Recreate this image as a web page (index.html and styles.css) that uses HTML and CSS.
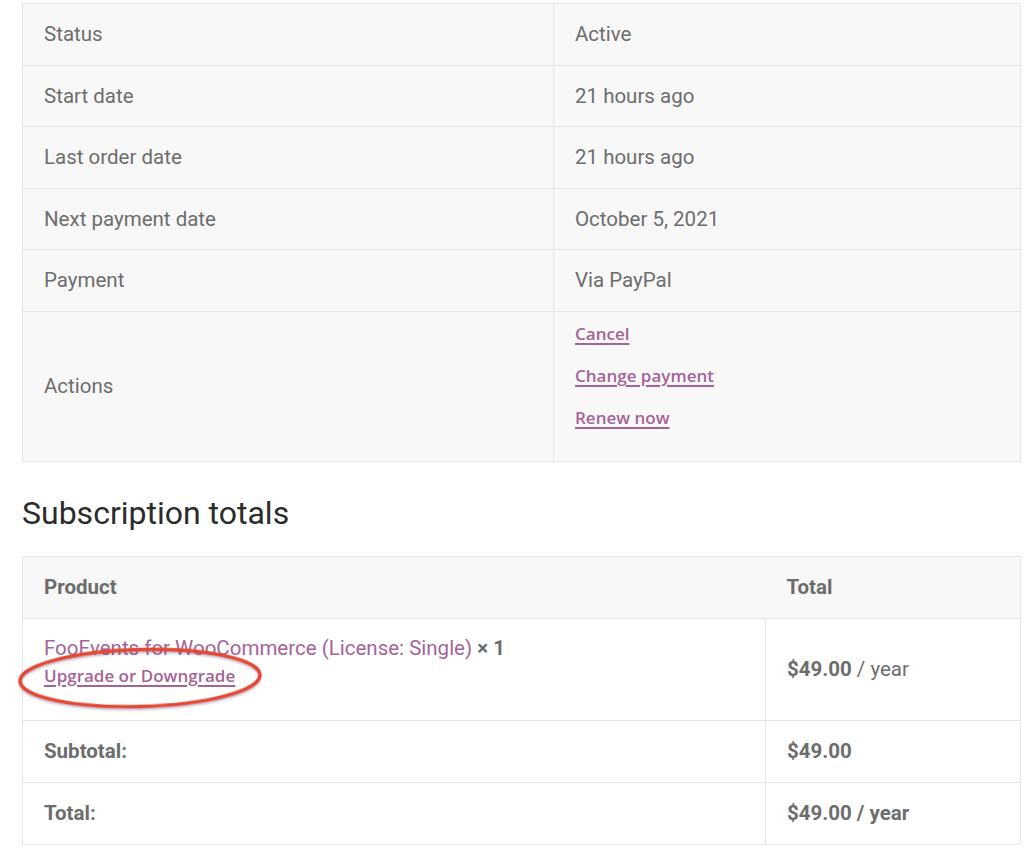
FILE: index.html
```html
<!DOCTYPE html>
<html lang="en">

<head>
  <meta charset="UTF-8">
  <meta name="viewport" content="width=device-width, initial-scale=1.0">
  <title>My Subscription</title>
  <link rel="stylesheet" href="styles.css">
</head>

<body>

  <div class="subscription">
    <table class="details">
      <tbody>
        <tr>
          <td>Status</td>
          <td>Active</td>
        </tr>
        <tr>
          <td>Start date</td>
          <td>21 hours ago</td>
        </tr>
        <tr>
          <td>Last order date</td>
          <td>21 hours ago</td>
        </tr>
        <tr>
          <td>Next payment date</td>
          <td>October 5, 2021</td>
        </tr>
        <tr>
          <td>Payment</td>
          <td>Via PayPal</td>
        </tr>
        <tr class="details__actions">
          <td>Actions</td>
          <td>
            <ul class="actions">
              <li><a href="#">Cancel</a></li>
              <li><a href="#">Change payment</a></li>
              <li><a href="#">Renew now</a></li>
            </ul>
          </td>
        </tr>
      </tbody>
    </table>

    <h2 class="subscription__title">Subscription totals</h2>

    <table class="totals">
      <thead>
        <tr>
          <th class="totals__product">Product</th>
          <th class="totals__total">Total</th>
        </tr>
      </thead>
      <tbody>
        <tr class="totals__item">
          <td class="totals__product">
            <div class="item">
              <a class="item__name" href="#">FooEvents for WooCommerce (License: Single)</a> <strong class="item__qty">&times;&nbsp;1</strong>
              <br>
              <a class="item__switch" href="#">Upgrade or Downgrade</a>
            </div>
            <svg class="item__circle" width="256" height="74" viewBox="0 0 256 74" aria-hidden="true">
              <defs>
                <filter id="shade" x="-10%" y="-20%" width="120%" height="150%">
                  <feDropShadow dx="0" dy="1.5" stdDeviation="1.2" flood-color="#5a3a6a" flood-opacity="0.45" />
                </filter>
              </defs>
              <ellipse cx="128" cy="36" rx="120" ry="28.5" fill="none" stroke="#e34a31" stroke-width="3.4" transform="rotate(-1.5 128 36)" filter="url(#shade)" />
            </svg>
          </td>
          <td class="totals__total"><strong>$49.00</strong> / year</td>
        </tr>
      </tbody>
      <tfoot>
        <tr>
          <th>Subtotal:</th>
          <td><strong>$49.00</strong></td>
        </tr>
        <tr>
          <th>Total:</th>
          <td><strong>$49.00 / year</strong></td>
        </tr>
      </tfoot>
    </table>
  </div>

</body>

</html>
```

FILE: styles.css
```css
*,
*:after,
*:before {
  margin: 0;
  padding: 0;
  box-sizing: border-box;
}

body {
  font-family: Roboto, "Liberation Sans", sans-serif;
  color: #6d6d6d;
  background: #fff;
}

.subscription {
  padding: 3px 3px 0 22px;
}

table {
  width: 999px;
  border-collapse: collapse;
  font-size: 20.5px;
}

td,
th {
  border: 1px solid #e6e6e6;
  text-align: left;
  vertical-align: middle;
  padding: 0 21px;
}

/* details */

.details td {
  background: #f8f8f8;
  height: 61.5px;
}

.details td:first-child {
  width: 531px;
}

.details__actions td {
  height: 150px;
}

.actions {
  list-style: none;
  margin-bottom: 22px;
}

.actions li + li {
  margin-top: 18px;
}

.actions a,
.item__switch {
  font-family: "Open Sans", sans-serif;
  font-weight: 600;
  font-size: 17px;
  color: #a46497;
  text-decoration: underline;
  text-underline-offset: 3px;
  text-decoration-thickness: 1.5px;
}

/* heading */

.subscription__title {
  font-weight: 400;
  font-size: 32px;
  color: #2b2b2b;
  margin: 32px 0 24px;
  line-height: 38px;
}

/* totals */

.totals th {
  font-weight: 700;
  height: 62px;
}

.totals thead th {
  background: #f8f8f8;
  border-left: none;
  border-right: none;
}

.totals thead th:first-child {
  border-left: 1px solid #e6e6e6;
}

.totals thead th:last-child {
  border-right: 1px solid #e6e6e6;
}

.totals__product {
  width: 743px;
}

.totals__item td {
  height: 102px;
  position: relative;
}

.totals tfoot td {
  height: 61px;
}

.item {
  line-height: 27px;
  padding-bottom: 15px;
}

.item__name {
  color: #a46497;
  text-decoration: none;
}

.item__qty {
  font-weight: 700;
}

.item__circle {
  position: absolute;
  left: -11px;
  top: 23px;
  pointer-events: none;
}

strong {
  font-weight: 700;
}
```
